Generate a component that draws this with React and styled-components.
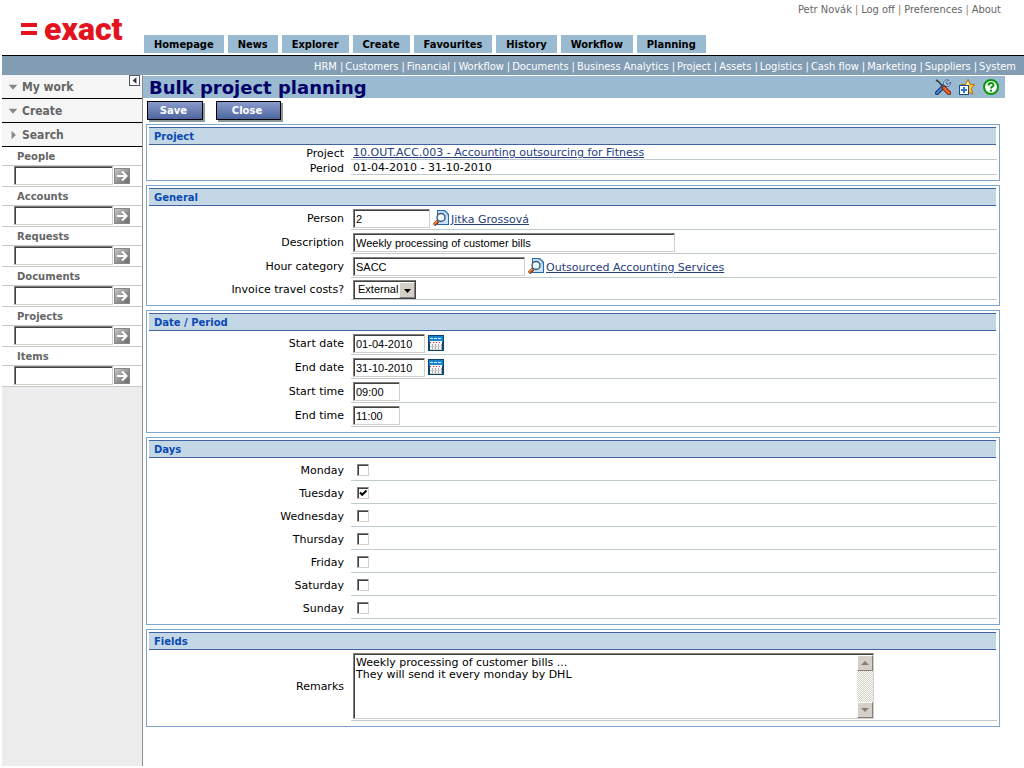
import React, { useState } from 'react';
import styled, { createGlobalStyle, css } from 'styled-components';

const verdana = '"DejaVu Sans", Verdana, sans-serif';
const tahoma = '"DejaVu Sans Condensed", "DejaVu Sans", Tahoma, sans-serif';
const arial = '"Liberation Sans", Arial, sans-serif';

const GlobalStyle = createGlobalStyle`
  * {
    box-sizing: border-box;
  }

  body {
    margin: 0;
    background: #fff;
    font-family: ${verdana};
    font-size: 11px;
    color: #000;
  }
`;

const Page = styled.div`
  display: flex;
  flex-direction: column;
  min-height: 100vh;
  padding: 0 0 2px 2px;
`;

const Header = styled.header`
  display: grid;
  grid-template-columns: 142px 1fr;
  height: 55px;
`;

const Logo = styled.a`
  display: flex;
  align-items: center;
  gap: 7px;
  padding: 2px 0 0 19px;
  color: #e2131f;
  font: 900 32px/32px Roboto, sans-serif;
  text-decoration: none;
`;

const HeaderRight = styled.div`
  display: flex;
  flex-direction: column;
  justify-content: space-between;
  padding-bottom: 2px;
`;

const LinkList = styled.nav`
  display: flex;
  justify-content: flex-end;
  color: ${props => props.$color};
  font-family: ${tahoma};
  font-size: 11px;
  line-height: 19px;
  white-space: nowrap;
`;

const UserLinks = styled(LinkList)`
  padding-right: 23px;
`;

const ModuleBar = styled(LinkList)`
  padding: 1px 8px 0 0;
  height: 20px;
  border-top: 1px solid #000;
  background: #829db4;
`;

const BarLink = styled.a`
  color: inherit;
  text-decoration: none;

  & + &::before {
    content: '|';
    margin: 0 3px;
    color: #a08060;
  }
`;

const ModuleLink = styled.a`
  color: inherit;
  text-decoration: none;

  & + &::before {
    content: '|';
    margin: 0 2px 0 3px;
  }
`;

const Tabs = styled.nav`
  display: flex;
  gap: 4px;
`;

const Tab = styled.a`
  padding: 1px 10px 0;
  background: #9abad1;
  color: #000;
  font: bold 11px/17px ${tahoma};
  text-decoration: none;
`;

const Body = styled.div`
  display: grid;
  grid-template-columns: 141px 1fr;
  flex: 1;
`;

const Sidebar = styled.aside`
  position: relative;
  border-right: 1px solid #938e8e;
  background: #ededed;
  color: #666;
`;

const CollapseButton = styled.button`
  position: absolute;
  top: 0;
  right: 2px;
  width: 11px;
  height: 11px;
  padding: 0;
  border: 1px solid #556;
  background: #fff;
  line-height: 0;
`;

const MenuItem = styled.button`
  display: flex;
  align-items: center;
  gap: 4px;
  width: 100%;
  height: 24px;
  padding: 0 6px;
  border: 0;
  border-bottom: 1px solid #000;
  background: #f6f6f6;
  color: #666;
  font: bold 12px/16px ${tahoma};
  text-align: left;
`;

const SearchLabel = styled.label`
  display: block;
  height: 19px;
  padding-left: 15px;
  border-bottom: 1px solid #c8c8c8;
  background: #fff;
  font-size: 10px;
  font-weight: bold;
  line-height: 19px;
`;

const SearchRow = styled.div`
  display: flex;
  align-items: flex-start;
  gap: 1px;
  height: 21px;
  padding-left: 12px;
  border-bottom: 1px solid #c8c8c8;
  background: #fff;
`;

const sunken = css`
  border: 1px solid;
  border-color: #808080 #d4d0c8 #d4d0c8 #808080;
  border-radius: 0;
  background: #fff;
  box-shadow: inset 1px 1px 0 #404040;
  outline: none;
`;

const TextInput = styled.input`
  ${sunken}
  flex: none;
  width: ${props => props.$width}px;
  height: 19px;
  padding: 1px 2px;
  color: #000;
  font: 11px/15px ${arial};
`;

const IconButton = styled.button`
  display: flex;
  align-items: flex-start;
  flex: none;
  width: 16px;
  height: 17px;
  padding: 0;
  border: 0;
  background: none;
`;

const GoButton = styled(IconButton)`
  height: 16px;
  margin-top: 2px;
`;

const Main = styled.main`
  min-width: 0;
  padding-right: 19px;
`;

const TitleBar = styled.div`
  display: flex;
  align-items: center;
  justify-content: space-between;
  height: 22px;
  margin-top: 1px;
  padding: 0 6px;
  background: #9abad1;
`;

const Title = styled.h1`
  margin: 0;
  padding-top: 1px;
  color: #000066;
  font-size: 18px;
  line-height: 21px;
`;

const Tools = styled.div`
  display: flex;
  gap: 8px;
`;

const Actions = styled.div`
  display: flex;
  gap: 13px;
  padding: 3px 4px 4px;
`;

const ActionButton = styled.button`
  width: ${props => props.$width}px;
  height: 19px;
  padding: 0 3px 0 0;
  border: 1px solid #000;
  background: linear-gradient(#8a9bcb, #4d659f);
  box-shadow: 2px 2px 0 #8c9a9a;
  color: #fff;
  font: bold 10px/15px ${verdana};
`;

const Panel = styled.section`
  margin: 0 5px 4px 3px;
  padding: 2px 2px 5px;
  border: 1px solid #7ea5cf;
`;

const PanelTitle = styled.h2`
  height: 18px;
  margin: 0 1px 0 0;
  padding: 1px 0 0 5px;
  border-top: 1px solid #41639f;
  border-bottom: 1px solid #41639f;
  background: #c4d7e4;
  color: #0a4ab4;
  font-size: 10px;
  line-height: 16px;
`;

const Row = styled.div`
  display: grid;
  grid-template-columns: 202px 1fr;
  height: ${props => props.$height}px;
  line-height: 12px;
`;

const RowLabel = styled.label`
  align-self: center;
  padding: 2px 7px 0 0;
  text-align: right;
`;

const RowValue = styled.div`
  display: flex;
  align-items: center;
  gap: 3px;
  padding: 2px 0 0 2px;
  border-bottom: 1px solid #c0cccc;
`;

const ValueLink = styled.a`
  color: #26407c;
  text-underline-offset: 1px;
`;

const LookupLink = styled(ValueLink)`
  margin-left: -1px;
  padding-top: 3px;
`;

const SelectBox = styled.span`
  ${sunken}
  display: flex;
  position: relative;
  width: 63px;
  height: 19px;
  border-color: #808080 #404040 #404040 #808080;
`;

const Select = styled.select`
  width: 100%;
  padding: 0 4px;
  border: 0;
  background: none;
  color: #000;
  font: 11px/15px ${arial};
  appearance: none;
  outline: none;
`;

const raised = css`
  border: 1px solid;
  border-color: #fff #808080 #808080 #fff;
  background: #d4d0c8;
`;

const SelectArrow = styled.span`
  ${raised}
  position: absolute;
  top: 1px;
  right: 0;
  width: 16px;
  height: 16px;
  line-height: 0;
  pointer-events: none;
`;

const CheckBox = styled.input`
  ${sunken}
  width: 12px;
  height: 12px;
  margin: 0 0 0 4px;
  appearance: none;

  &:checked {
    background: url("data:image/svg+xml,%3Csvg xmlns='http://www.w3.org/2000/svg' viewBox='0 0 10 10'%3E%3Cpath d='M2 4.5l2.2 2.3L8.5 2.5' fill='none' stroke='%23000' stroke-width='2'/%3E%3C/svg%3E");
  }
`;

const RemarksBox = styled.div`
  ${sunken}
  display: flex;
  width: 521px;
  height: 66px;
  padding: 1px 0 0 1px;
`;

const Remarks = styled.textarea`
  flex: 1;
  min-width: 0;
  padding: 2px 1px;
  border: 0;
  background: none;
  color: #000;
  font: 11px/12px ${verdana};
  resize: none;
  outline: none;
  overflow: hidden;
`;

const ScrollBar = styled.div`
  display: flex;
  flex-direction: column;
  justify-content: space-between;
  width: 16px;
  background: repeating-conic-gradient(#d4d0c8 0 25%, #fff 0 50%) 0 0 / 2px 2px;
`;

const ScrollButton = styled.button`
  ${raised}
  width: 16px;
  height: 16px;
  padding: 0;
  line-height: 0;
`;

const Triangle = ({ points, color = '#808080', size = 14 }) => (
  <svg width={size} height={size} viewBox="0 0 14 14">
    <polygon points={points} fill={color} />
  </svg>
);

const GoIcon = () => (
  <svg width="16" height="16" viewBox="0 0 16 16">
    <defs>
      <linearGradient id="go" x1="0" y1="0" x2="1" y2="1">
        <stop offset="0" stopColor="#c8c8c8" />
        <stop offset="1" stopColor="#666" />
      </linearGradient>
    </defs>
    <rect x="0.5" y="0.5" width="15" height="15" fill="url(#go)" stroke="#888" />
    <path d="M3 8h9M8 3.5L12.5 8L8 12.5" fill="none" stroke="#fff" strokeWidth="2" />
  </svg>
);

const LookupIcon = () => (
  <svg width="16" height="16" viewBox="0 0 16 16">
    <path d="M4 0h8l4 4v11H4z" fill="#2468b4" />
    <path d="M5 1h6l4 4v9H5z" fill="#c4e2fa" />
    <path d="M11 1v4h4z" fill="#fff" stroke="#5c98d4" strokeWidth="0.6" />
    <path d="M1 15l4-4" stroke="#6c3010" strokeWidth="3.4" />
    <path d="M1 14.4l3.4-3.4" stroke="#f4843c" strokeWidth="2" />
    <circle cx="8" cy="7.5" r="4" fill="#e4f8fe" stroke="#40566c" strokeWidth="1.4" />
    <path d="M6 7.5a2 2 0 0 1 2-2" fill="none" stroke="#fff" />
  </svg>
);

const CalendarIcon = () => (
  <svg width="16" height="16" viewBox="0 0 16 16">
    <rect width="16" height="16" fill="#0c4470" />
    <rect x="1" y="1" width="14" height="6" fill="#1c84cc" />
    <path d="M2 3.5h12" stroke="#d8ecfa" strokeDasharray="3 1" />
    <rect x="2" y="6" width="12" height="9" fill="#f8f8f8" />
    <path d="M2 7.5h12" stroke="#d82838" strokeDasharray="1 2" />
    <path d="M4.5 9v6M7.5 9v6M10.5 9v6M13.5 9v6" stroke="#a8a8a8" />
    <path d="M2 11.5h12M2 14.5h12" stroke="#d0d0d0" />
  </svg>
);

const ToolsIcon = () => (
  <svg width="16" height="16" viewBox="0 0 16 16">
    <path d="M1 1l3 2l5 6" fill="none" stroke="#383838" strokeWidth="1.6" />
    <path d="M2 14l8-8" stroke="#143468" strokeWidth="4" strokeLinecap="round" />
    <path d="M2 14l8-8" stroke="#4888d8" strokeWidth="2" strokeLinecap="round" />
    <path d="M13.5 1l-2.500 2.500l0.500 1.500l1.500 0.500l2.500-2.500c0.600 3-1.500 5-4.500 4.500l-2.500-2c-0.500-3 2-5.500 5-4.500z" fill="#b8cce4" stroke="#30507c" strokeWidth="0.8" />
    <path d="M9 9l5 5" stroke="#6c1c08" strokeWidth="4.4" strokeLinecap="round" />
    <path d="M9 9l5 5" stroke="#f06030" strokeWidth="2.6" strokeLinecap="round" />
  </svg>
);

const FavouriteIcon = () => (
  <svg width="16" height="16" viewBox="0 0 16 16">
    <path d="M9 0.5l2.200 4.700l4.500 0.500l-3.300 3.500l1.500 6.300l-4.900-2.800l-4.500 2.300l0.800-5.800l-3.500-3.500l5-0.500z" fill="#fcc42c" stroke="#b87010" />
    <path d="M9 2l1 4l-4 1z" fill="#fff0a0" />
    <rect x="0.5" y="6.5" width="9" height="9" fill="#fff" stroke="#1c4c90" />
    <path d="M5 8v6M2 11h6" stroke="#2878d0" strokeWidth="2" />
  </svg>
);

const HelpIcon = () => (
  <svg width="16" height="16" viewBox="0 0 16 16">
    <circle cx="8" cy="8" r="7" fill="#fff" stroke="#0a960a" strokeWidth="2" />
    <path d="M5.5 6.5c0-3.200 5-3.200 5-0.500c0 1.800-2.500 1.600-2.500 3.500M8 10.800v2" fill="none" stroke="#0a960a" strokeWidth="2" />
  </svg>
);

const userLinks = ['Petr Novák', 'Log off', 'Preferences', 'About'];
const tabs = ['Homepage', 'News', 'Explorer', 'Create', 'Favourites', 'History', 'Workflow', 'Planning'];
const modules = [
  'HRM', 'Customers', 'Financial', 'Workflow', 'Documents', 'Business Analytics', 'Project',
  'Assets', 'Logistics', 'Cash flow', 'Marketing', 'Suppliers', 'System',
];
const searches = ['People', 'Accounts', 'Requests', 'Documents', 'Projects', 'Items'];
const weekDays = ['Monday', 'Tuesday', 'Wednesday', 'Thursday', 'Friday', 'Saturday', 'Sunday'];

const Field = ({ label, id, height = 24, children }) => (
  <Row $height={height}>
    <RowLabel as={id ? 'label' : 'span'} htmlFor={id}>{label}</RowLabel>
    <RowValue>{children}</RowValue>
  </Row>
);

const App = () => {
  const [days, setDays] = useState(['Tuesday']);

  const toggleDay = day => setDays(
    days.includes(day) ? days.filter(d => d !== day) : [...days, day]
  );

  return (
    <Page>
      <GlobalStyle />
      <Header>
        <Logo href="#">
          <svg width="16" height="12" viewBox="0 0 16 12">
            <path d="M0 0h16v4H0zM0 8h16v4H0z" fill="#e2131f" />
          </svg>
          exact
        </Logo>
        <HeaderRight>
          <UserLinks $color="#666">
            {userLinks.map(link => <BarLink key={link} href="#">{link}</BarLink>)}
          </UserLinks>
          <Tabs>
            {tabs.map(tab => <Tab key={tab} href="#">{tab}</Tab>)}
          </Tabs>
        </HeaderRight>
      </Header>
      <ModuleBar $color="#fff">
        {modules.map(link => <ModuleLink key={link} href="#">{link}</ModuleLink>)}
      </ModuleBar>
      <Body>
        <Sidebar>
          <MenuItem><Triangle size={10} points="1,4 13,4 7,11" color="#888" />My work</MenuItem>
          <MenuItem><Triangle size={10} points="1,4 13,4 7,11" color="#888" />Create</MenuItem>
          <MenuItem><Triangle size={10} points="5,1 11,7 5,13" color="#888" />Search</MenuItem>
          {searches.map(name => (
            <React.Fragment key={name}>
              <SearchLabel htmlFor={`search-${name}`}>{name}</SearchLabel>
              <SearchRow>
                <TextInput id={`search-${name}`} $width={99} />
                <GoButton aria-label={`Search ${name}`}><GoIcon /></GoButton>
              </SearchRow>
            </React.Fragment>
          ))}
          <CollapseButton aria-label="Collapse menu">
            <Triangle size={9} points="10,2 10,12 4,7" color="#334" />
          </CollapseButton>
        </Sidebar>
        <Main>
          <TitleBar>
            <Title>Bulk project planning</Title>
            <Tools>
              <IconButton aria-label="Settings"><ToolsIcon /></IconButton>
              <IconButton aria-label="Add to favourites"><FavouriteIcon /></IconButton>
              <IconButton aria-label="Help"><HelpIcon /></IconButton>
            </Tools>
          </TitleBar>
          <Actions>
            <ActionButton $width={56}>Save</ActionButton>
            <ActionButton $width={65}>Close</ActionButton>
          </Actions>

          <Panel>
            <PanelTitle>Project</PanelTitle>
            <Field label="Project" height={15}>
              <ValueLink href="#">10.OUT.ACC.003 - Accounting outsourcing for Fitness</ValueLink>
            </Field>
            <Field label="Period" height={15}>01-04-2010 - 31-10-2010</Field>
          </Panel>

          <Panel>
            <PanelTitle>General</PanelTitle>
            <Field label="Person" id="person">
              <TextInput id="person" $width={77} defaultValue="2" />
              <IconButton aria-label="Look up person"><LookupIcon /></IconButton>
              <LookupLink href="#">Jitka Grossová</LookupLink>
            </Field>
            <Field label="Description" id="description">
              <TextInput id="description" $width={322} defaultValue="Weekly processing of customer bills" />
            </Field>
            <Field label="Hour category" id="category">
              <TextInput id="category" $width={172} defaultValue="SACC" />
              <IconButton aria-label="Look up hour category"><LookupIcon /></IconButton>
              <LookupLink href="#">Outsourced Accounting Services</LookupLink>
            </Field>
            <Field label="Invoice travel costs?" id="travel" height={22}>
              <SelectBox>
                <Select id="travel" defaultValue="External">
                  <option>External</option>
                  <option>Internal</option>
                </Select>
                <SelectArrow><Triangle points="4,6 11,6 7.5,10" color="#000" /></SelectArrow>
              </SelectBox>
            </Field>
          </Panel>

          <Panel>
            <PanelTitle>Date / Period</PanelTitle>
            <Field label="Start date" id="start-date">
              <TextInput id="start-date" $width={72} defaultValue="01-04-2010" />
              <IconButton aria-label="Pick start date"><CalendarIcon /></IconButton>
            </Field>
            <Field label="End date" id="end-date">
              <TextInput id="end-date" $width={72} defaultValue="31-10-2010" />
              <IconButton aria-label="Pick end date"><CalendarIcon /></IconButton>
            </Field>
            <Field label="Start time" id="start-time">
              <TextInput id="start-time" $width={47} defaultValue="09:00" />
            </Field>
            <Field label="End time" id="end-time">
              <TextInput id="end-time" $width={47} defaultValue="11:00" />
            </Field>
          </Panel>

          <Panel>
            <PanelTitle>Days</PanelTitle>
            {weekDays.map(day => (
              <Field key={day} label={day} id={day} height={23}>
                <CheckBox type="checkbox" id={day} checked={days.includes(day)} onChange={() => toggleDay(day)} />
              </Field>
            ))}
          </Panel>

          <Panel>
            <PanelTitle>Fields</PanelTitle>
            <Field label="Remarks" id="remarks" height={71}>
              <RemarksBox>
                <Remarks
                  id="remarks"
                  defaultValue={'Weekly processing of customer bills ...\nThey will send it every monday by DHL'}
                />
                <ScrollBar>
                  <ScrollButton aria-label="Scroll up"><Triangle points="3,9 11,9 7,5" /></ScrollButton>
                  <ScrollButton aria-label="Scroll down"><Triangle points="3,5 11,5 7,9" /></ScrollButton>
                </ScrollBar>
              </RemarksBox>
            </Field>
          </Panel>
        </Main>
      </Body>
    </Page>
  );
};

export default App;
